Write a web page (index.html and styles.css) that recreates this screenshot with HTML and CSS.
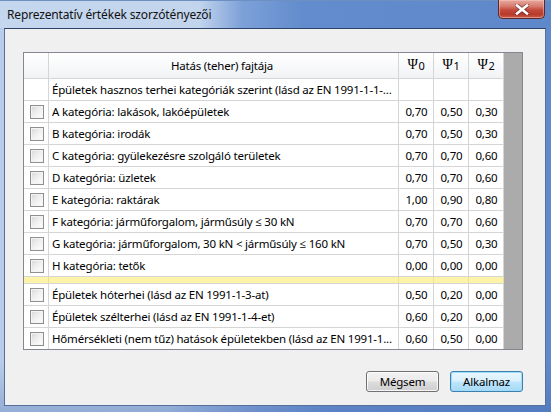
FILE: index.html
```html
<!DOCTYPE html>
<html lang="hu">
<head>
<meta charset="utf-8">
<title>Reprezentatív értékek szorzótényezői</title>
<link rel="stylesheet" href="styles.css">
</head>
<body>
<div class="window">
  <div class="titlebar">
    <span class="title">Reprezentatív értékek szorzótényezői</span>
    <div class="close">
      <svg width="14" height="11" viewBox="0 0 14 11">
        <path d="M2 1.5 L12 9.5 M12 1.5 L2 9.5" stroke="#3a1a1a" stroke-width="4.2" stroke-linecap="square" fill="none" opacity="0.55"/>
        <path d="M2 1.5 L12 9.5 M12 1.5 L2 9.5" stroke="#ffffff" stroke-width="2.6" stroke-linecap="square" fill="none"/>
      </svg>
    </div>
  </div>
  <div class="client">
    <div class="grid">
      <div class="table">
        <div class="cell hdr"></div>
        <div class="cell hdr name-h">Hatás (teher) fajtája</div>
        <div class="cell hdr psi"><span class="g">Ψ</span><sub>0</sub></div>
        <div class="cell hdr psi"><span class="g">Ψ</span><sub>1</sub></div>
        <div class="cell hdr psi"><span class="g">Ψ</span><sub>2</sub></div>

        <div class="cell"></div>
        <div class="cell name">Épületek hasznos terhei kategóriák szerint (lásd az EN 1991-1-1-...</div>
        <div class="cell"></div>
        <div class="cell"></div>
        <div class="cell"></div>

        <div class="cell chk"><span class="box"></span></div>
        <div class="cell name">A kategória: lakások, lakóépületek</div>
        <div class="cell num">0,70</div>
        <div class="cell num">0,50</div>
        <div class="cell num">0,30</div>

        <div class="cell chk"><span class="box"></span></div>
        <div class="cell name">B kategória: irodák</div>
        <div class="cell num">0,70</div>
        <div class="cell num">0,50</div>
        <div class="cell num">0,30</div>

        <div class="cell chk"><span class="box"></span></div>
        <div class="cell name">C kategória: gyülekezésre szolgáló területek</div>
        <div class="cell num">0,70</div>
        <div class="cell num">0,70</div>
        <div class="cell num">0,60</div>

        <div class="cell chk"><span class="box"></span></div>
        <div class="cell name">D kategória: üzletek</div>
        <div class="cell num">0,70</div>
        <div class="cell num">0,70</div>
        <div class="cell num">0,60</div>

        <div class="cell chk"><span class="box"></span></div>
        <div class="cell name">E kategória: raktárak</div>
        <div class="cell num">1,00</div>
        <div class="cell num">0,90</div>
        <div class="cell num">0,80</div>

        <div class="cell chk"><span class="box"></span></div>
        <div class="cell name">F kategória: járműforgalom, járműsúly ≤ 30 kN</div>
        <div class="cell num">0,70</div>
        <div class="cell num">0,70</div>
        <div class="cell num">0,60</div>

        <div class="cell chk"><span class="box"></span></div>
        <div class="cell name">G kategória: járműforgalom, 30 kN &lt; járműsúly ≤ 160 kN</div>
        <div class="cell num">0,70</div>
        <div class="cell num">0,50</div>
        <div class="cell num">0,30</div>

        <div class="cell chk"><span class="box"></span></div>
        <div class="cell name">H kategória: tetők</div>
        <div class="cell num">0,00</div>
        <div class="cell num">0,00</div>
        <div class="cell num">0,00</div>

        <div class="cell sep"></div>
        <div class="cell sep"></div>
        <div class="cell sep"></div>
        <div class="cell sep"></div>
        <div class="cell sep"></div>

        <div class="cell chk"><span class="box"></span></div>
        <div class="cell name">Épületek hóterhei (lásd az EN 1991-1-3-at)</div>
        <div class="cell num">0,50</div>
        <div class="cell num">0,20</div>
        <div class="cell num">0,00</div>

        <div class="cell chk"><span class="box"></span></div>
        <div class="cell name">Épületek szélterhei (lásd az EN 1991-1-4-et)</div>
        <div class="cell num">0,60</div>
        <div class="cell num">0,20</div>
        <div class="cell num">0,00</div>

        <div class="cell chk last"><span class="box"></span></div>
        <div class="cell name last">Hőmérsékleti (nem tűz) hatások épületekben (lásd az EN 1991-1...</div>
        <div class="cell num last">0,60</div>
        <div class="cell num last">0,50</div>
        <div class="cell num last">0,00</div>
      </div>
      <div class="fill"></div>
    </div>
    <div class="buttons">
      <button class="btn">Mégsem</button>
      <button class="btn default">Alkalmaz</button>
    </div>
  </div>
</div>
</body>
</html>
```

FILE: styles.css
```css
html, body {
  margin: 0;
  padding: 0;
}
body {
  width: 551px;
  height: 412px;
  overflow: hidden;
  font-family: "Noto Sans", "Open Sans", "DejaVu Sans", sans-serif;
  font-size: 12px;
  color: #000;
}
.window {
  box-sizing: border-box;
  width: 551px;
  height: 412px;
  padding: 0 5px 6px 4px;
  display: flex;
  flex-direction: column;
  background:
    linear-gradient(to bottom, rgba(255,255,255,0) 0%, rgba(255,255,255,0) 88%, rgba(40,80,160,0.25) 100%),
    linear-gradient(to right, #b9cde8 0%, #b3c9e7 30%, #86a6da 45%, #6a92d0 60%, #6189cb 100%);
}
.titlebar {
  height: 28px;
  flex: 0 0 28px;
  display: flex;
  align-items: flex-start;
  justify-content: space-between;
  background: linear-gradient(to right, #c5d7ee 0%, #c3d5ed 36%, #7da0d8 44%, #628ccd 55%, #5f88cb 100%);
  margin: 0 -5px 0 -4px;
  padding: 0 6px 0 7px;
  border-top: 1px solid #6e8fc2;
  box-sizing: border-box;
}
.title {
  line-height: 22px;
  padding-top: 3px;
  color: #111;
  white-space: nowrap;
  letter-spacing: -0.15px;
}
.close {
  width: 47px;
  height: 19px;
  margin-top: -1px;
  box-sizing: border-box;
  border: 1px solid #5a2a2a;
  border-top: none;
  border-radius: 0 0 5px 5px;
  background: linear-gradient(to bottom, #e8a99f 0%, #d77a6d 35%, #c34b3c 55%, #b8392a 80%, #c9604e 100%);
  display: flex;
  align-items: center;
  justify-content: center;
  box-shadow: inset 0 0 0 1px rgba(255,210,200,0.45);
}
.client {
  flex: 1;
  box-sizing: border-box;
  background: #f0f0f0;
  border: 1px solid #56709a;
  border-top-color: #2e4466;
  padding: 23px 21px 0 18px;
  display: flex;
  flex-direction: column;
}
.grid {
  display: flex;
  border: 1px solid #828790;
  background: #ababab;
  width: 500px;
  box-sizing: border-box;
}
.table {
  display: grid;
  grid-template-columns: 25px 350px 35px 35px 35px;
  grid-template-rows: 26px repeat(9, 22px) 7px 22px 22px 21px;
  background: #fff;
}
.fill {
  flex: 1;
  background: #ababab;
}
.cell {
  box-sizing: border-box;
  border-right: 1px solid #d5d5d5;
  border-bottom: 1px solid #d5d5d5;
  display: flex;
  align-items: center;
  overflow: hidden;
  white-space: nowrap;
  background: #fff;
  font-size: 11.5px;
  letter-spacing: -0.2px;
}
.cell.last {
  border-bottom: none;
}
.hdr {
  background: linear-gradient(to bottom, #ffffff 0%, #f7f8fa 60%, #f1f2f4 100%);
}
.name-h {
  justify-content: center;
  padding-right: 3px;
}
.psi {
  justify-content: center;
  align-items: center;
  padding-bottom: 1px;
}
.psi .g {
  font-family: "Liberation Serif", "DejaVu Serif", serif;
  font-size: 14px;
  line-height: 14px;
}
.psi sub {
  font-size: 11px;
  line-height: 11px;
  vertical-align: -4px;
  margin-left: 1px;
}
.name {
  padding-left: 3px;
}
.num {
  justify-content: center;
  padding-left: 1px;
}
.chk {
  justify-content: center;
}
.box {
  width: 14px;
  height: 14px;
  box-sizing: border-box;
  border: 1px solid #8e8f8f;
  background: linear-gradient(135deg, #d6d6d6 0%, #eeeeee 45%, #ffffff 100%);
  box-shadow: inset 0 0 0 1px #f4f4f4;
  margin-left: 1px;
}
.sep {
  background: #fdf4a9;
  border-right-color: #e6dfa3;
}
.buttons {
  display: flex;
  justify-content: flex-end;
  gap: 11px;
  margin-top: 21px;
  width: 500px;
}
.btn {
  width: 73px;
  height: 21px;
  box-sizing: border-box;
  font-family: inherit;
  font-size: 11.5px;
  letter-spacing: -0.2px;
  color: #000;
  padding: 0;
  border: 1px solid #707070;
  border-radius: 3px;
  background: linear-gradient(to bottom, #f2f2f2 0%, #ebebeb 49%, #dddddd 51%, #cfcfcf 100%);
  box-shadow: inset 0 0 0 1px rgba(255,255,255,0.8);
}
.btn.default {
  border-color: #3c7fb1;
  background: linear-gradient(to bottom, #eaf6fd 0%, #d9f0fc 49%, #bee6fd 51%, #a7d9f5 100%);
  box-shadow: inset 0 0 0 1px #9fdcf8;
}
```
